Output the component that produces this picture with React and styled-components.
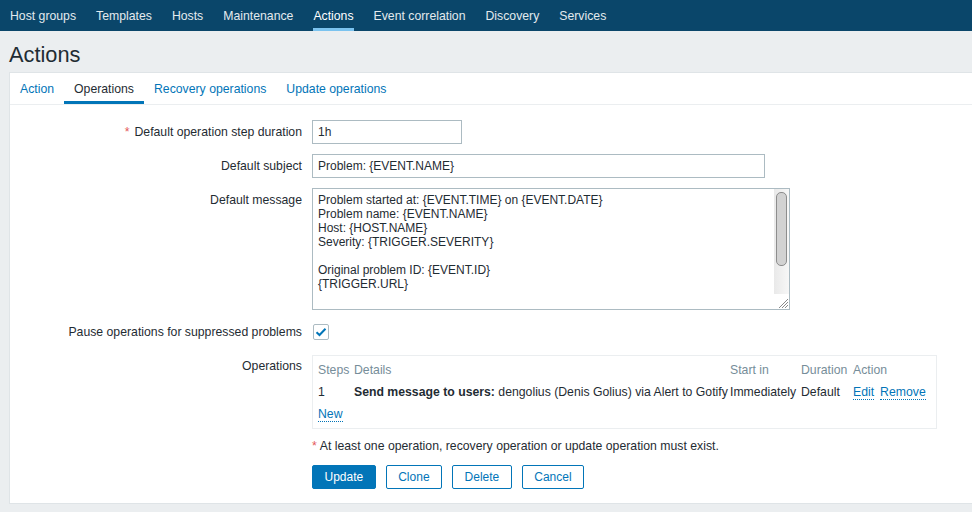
import React from 'react';
import styled, { createGlobalStyle } from 'styled-components';

const GlobalStyle = createGlobalStyle`
  html, body {
    margin: 0;
    padding: 0;
  }
  body {
    background: #ebeef0;
    color: #1f2c33;
    font-family: "Liberation Sans", Arial, sans-serif;
    font-size: 12.25px;
    line-height: 14px;
    overflow: hidden;
  }
`;

const TopNav = styled.nav`
  display: flex;
  height: 31px;
  background: #0a466a;
`;

const NavItem = styled.a`
  position: relative;
  display: flex;
  align-items: center;
  padding: 0 10px;
  color: ${(p) => (p.$active ? '#ffffff' : '#e3eaee')};
  text-decoration: none;
  white-space: nowrap;

  &::after {
    content: '';
    display: ${(p) => (p.$active ? 'block' : 'none')};
    position: absolute;
    left: 10px;
    right: 10px;
    bottom: 0;
    height: 3px;
    background: #7bc3ef;
  }
`;

const Header = styled.header`
  display: flex;
  align-items: center;
  height: 41px;
  padding: 0 9px;
`;

const Title = styled.h1`
  margin: 0;
  font-size: 21.8px;
  font-weight: normal;
  line-height: 24px;
  padding-top: 6px;
`;

const Panel = styled.section`
  margin: 0 -20px 0 9px;
  background: #ffffff;
  border: 1px solid #dfe4e7;
`;

const Tabs = styled.ul`
  display: flex;
  margin: 0;
  padding: 0;
  list-style: none;
  border-bottom: 1px solid #ebeef0;
`;

const Tab = styled.li`
  position: relative;
  display: flex;
  align-items: center;
  height: 31px;
  padding: 0 10px;
  color: ${(p) => (p.$active ? '#1f2c33' : '#0275b8')};

  &::after {
    content: '';
    display: ${(p) => (p.$active ? 'block' : 'none')};
    position: absolute;
    left: 0;
    right: 0;
    bottom: 0;
    height: 3px;
    background: #0275b8;
  }
`;

const Form = styled.div`
  display: grid;
  grid-template-columns: 292px 1fr;
  column-gap: 10px;
  row-gap: 10px;
  padding: 15px 0 14px;
`;

const Label = styled.label`
  text-align: right;
  padding-top: 5px;
  line-height: 14px;
  white-space: nowrap;
`;

const Asterisk = styled.span`
  color: #e45959;
  margin-right: ${(p) => (p.$tight ? 3 : 5)}px;
`;

const Field = styled.div`
  display: flex;
  align-items: ${(p) => (p.$center ? 'center' : 'flex-start')};
  min-height: ${(p) => (p.$center ? '24px' : '0')};
`;

const TextInput = styled.input`
  box-sizing: border-box;
  width: ${(p) => p.$width}px;
  height: 24px;
  padding: 0 5px;
  border: 1px solid #acbbc2;
  background: #ffffff;
  color: #1f2c33;
  font: 12px "Liberation Sans", Arial, sans-serif;
  outline: none;
`;

const TextAreaBox = styled.div`
  box-sizing: border-box;
  display: flex;
  width: 478px;
  height: 122px;
  border: 1px solid #acbbc2;
  background: #ffffff;
`;

const TextArea = styled.textarea`
  flex: 1;
  margin: 0;
  padding: 4px 5px;
  border: none;
  color: #1f2c33;
  font: 12px "Liberation Sans", Arial, sans-serif;
  line-height: 14px;
  overflow: hidden;
  resize: none;
  outline: none;
`;

const ScrollColumn = styled.div`
  display: flex;
  flex-direction: column;
  width: 15px;
`;

const ScrollTrack = styled.div`
  flex: 1;
  padding: 3px 2px 0 2px;
  background: linear-gradient(to right, #e9e9e9, #f7f7f7);
`;

const ScrollThumb = styled.div`
  box-sizing: border-box;
  height: 74px;
  border: 1px solid #8d8d8d;
  border-radius: 5px;
  background: #d2d2d2;
`;

const Resizer = styled.div`
  display: flex;
  align-items: flex-end;
  justify-content: flex-end;
  height: 15px;
  background: #ffffff;
`;

const CheckBox = styled.span`
  box-sizing: border-box;
  display: flex;
  align-items: center;
  justify-content: center;
  width: 16px;
  height: 16px;
  margin-left: 1px;
  border: 1px solid #acbbc2;
  border-radius: 2px;
  background: #ffffff;
`;

const OpsBox = styled.div`
  box-sizing: border-box;
  width: 625px;
  margin-top: 1px;
  padding: 3px 5px;
  border: 1px solid #ebeef0;
`;

const OpsGrid = styled.div`
  display: grid;
  grid-template-columns: 36px 376px 71px 52px 1fr;
  grid-auto-rows: 22px;
  align-items: center;
`;

const HeadCell = styled.div`
  color: #768d99;
  white-space: nowrap;
`;

const Cell = styled.div`
  white-space: nowrap;
`;

const Link = styled.a`
  color: #0275b8;
  text-decoration: none;
  border-bottom: 1px dotted #0275b8;
  margin-right: ${(p) => (p.$gap ? '6px' : '0')};
  cursor: pointer;
`;

const ErrorText = styled.div`
  line-height: 14px;
`;

const Buttons = styled.div`
  display: flex;
  gap: 10px;
  padding-top: 2px;
`;

const Button = styled.button`
  box-sizing: border-box;
  height: 24px;
  padding: 0 11.5px;
  border: 1px solid #0275b8;
  border-radius: 2px;
  background: ${(p) => (p.$primary ? '#0275b8' : '#ffffff')};
  color: ${(p) => (p.$primary ? '#ffffff' : '#0275b8')};
  font: 12px "Liberation Sans", Arial, sans-serif;
  cursor: pointer;
`;

const navItems = ['Host groups', 'Templates', 'Hosts', 'Maintenance', 'Actions', 'Event correlation', 'Discovery', 'Services'];
const tabs = ['Action', 'Operations', 'Recovery operations', 'Update operations'];

const message =
  'Problem started at: {EVENT.TIME} on {EVENT.DATE}\nProblem name: {EVENT.NAME}\nHost: {HOST.NAME}\nSeverity: {TRIGGER.SEVERITY}\n\nOriginal problem ID: {EVENT.ID}\n{TRIGGER.URL}';

export default function App() {
  return (
    <>
      <GlobalStyle />
      <TopNav>
        {navItems.map((item) => (
          <NavItem key={item} $active={item === 'Actions'}>
            {item}
          </NavItem>
        ))}
      </TopNav>
      <Header>
        <Title>Actions</Title>
      </Header>
      <Panel>
        <Tabs>
          {tabs.map((tab) => (
            <Tab key={tab} $active={tab === 'Operations'}>
              {tab}
            </Tab>
          ))}
        </Tabs>
        <Form>
          <Label>
            <Asterisk>*</Asterisk>Default operation step duration
          </Label>
          <Field>
            <TextInput $width={150} defaultValue="1h" />
          </Field>

          <Label>Default subject</Label>
          <Field>
            <TextInput $width={453} defaultValue="Problem: {EVENT.NAME}" />
          </Field>

          <Label>Default message</Label>
          <Field>
            <TextAreaBox>
              <TextArea defaultValue={message} spellCheck={false} />
              <ScrollColumn>
                <ScrollTrack>
                  <ScrollThumb />
                </ScrollTrack>
                <Resizer>
                  <svg width="13" height="13" viewBox="0 0 13 13">
                    <path d="M12 3 L3 12 M12 6 L6 12 M12 9 L9 12" stroke="#8a8a8a" strokeWidth="1" />
                  </svg>
                </Resizer>
              </ScrollColumn>
            </TextAreaBox>
          </Field>

          <Label>Pause operations for suppressed problems</Label>
          <Field $center>
            <CheckBox>
              <svg width="12" height="10" viewBox="0 0 12 10">
                <path d="M1.5 5.2 L4.5 8 L10.5 1.8" fill="none" stroke="#0275b8" strokeWidth="2" />
              </svg>
            </CheckBox>
          </Field>

          <Label>Operations</Label>
          <Field>
            <OpsBox>
              <OpsGrid>
                <HeadCell>Steps</HeadCell>
                <HeadCell>Details</HeadCell>
                <HeadCell>Start in</HeadCell>
                <HeadCell>Duration</HeadCell>
                <HeadCell>Action</HeadCell>

                <Cell>1</Cell>
                <Cell>
                  <strong>Send message to users:</strong> dengolius (Denis Golius) via Alert to Gotify
                </Cell>
                <Cell>Immediately</Cell>
                <Cell>Default</Cell>
                <Cell>
                  <Link $gap>Edit</Link>
                  <Link>Remove</Link>
                </Cell>

                <Cell>
                  <Link>New</Link>
                </Cell>
              </OpsGrid>
            </OpsBox>
          </Field>

          <div />
          <ErrorText>
            <Asterisk $tight>*</Asterisk>At least one operation, recovery operation or update operation must exist.
          </ErrorText>

          <div />
          <Buttons>
            <Button $primary>Update</Button>
            <Button>Clone</Button>
            <Button>Delete</Button>
            <Button>Cancel</Button>
          </Buttons>
        </Form>
      </Panel>
    </>
  );
}
